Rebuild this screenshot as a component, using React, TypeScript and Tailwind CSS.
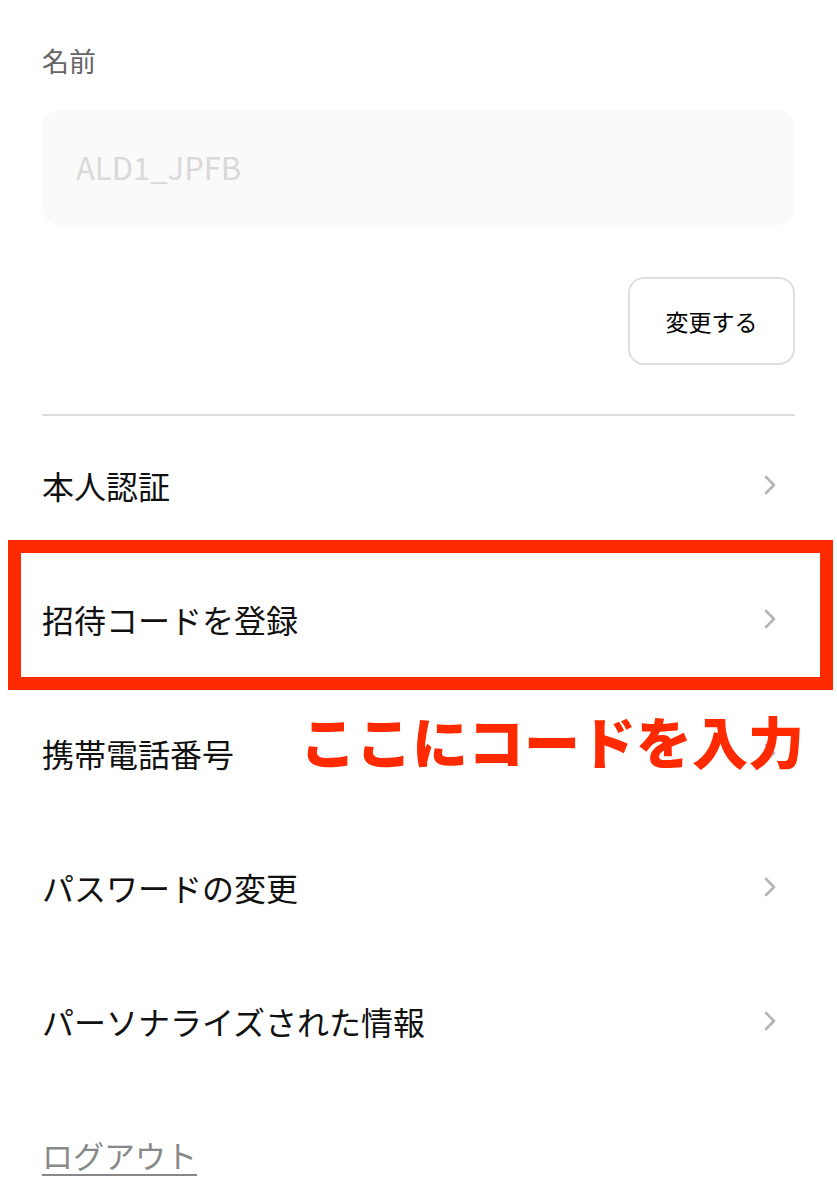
const rows = ["本人認証", "招待コードを登録", "携帯電話番号", "パスワードの変更", "パーソナライズされた情報"];

function Chevron() {
  return (
    <svg width="14" height="20" viewBox="0 0 14 20" fill="none" className="shrink-0 mt-[3px]">
      <path d="M3 2l8 8-8 8" stroke="#b5b5b5" strokeWidth="2.6" strokeLinecap="round" strokeLinejoin="round" />
    </svg>
  );
}

export default function App() {
  return (
    <div
      className="w-[837px] h-[1200px] bg-white overflow-hidden px-[42px] flex flex-col"
      style={{ fontFamily: '"Noto Sans CJK JP", "Noto Sans", sans-serif' }}
    >
      <div className="mt-[44px] text-[27px] leading-[34px] text-[#666]">名前</div>

      <div className="mt-[32px] h-[115px] rounded-[18px] bg-[#fafafa] flex items-center pl-[34px] text-[31px] text-[#d9d9d9]">
        ALD1_JPFB
      </div>

      <button className="mt-[52px] self-end w-[167px] h-[88px] border-2 border-[#dedede] rounded-[16px] text-[23px] text-black bg-white">
        変更する
      </button>

      <div className="mt-[49px] h-[2px] bg-[#dddddd]" />

      <div className="relative">
        {rows.map((r) => (
          <div key={r} className="h-[134px] flex items-center justify-between pr-[18px]">
            <span className="text-[32px] text-[#111] mt-[4px]">{r}</span>
            <Chevron />
          </div>
        ))}

        <div className="absolute left-[-34px] top-[124px] w-[825px] h-[150px] border-[13px] border-[#ff2a00]" />
        <div className="absolute left-[258px] top-[296px] whitespace-nowrap text-[56px] leading-none font-black text-[#ff2a00]">
          ここにコードを入力
        </div>
      </div>

      <div className="mt-[46px]">
        <span className="text-[31px] text-[#888] underline underline-offset-[6px] decoration-2">ログアウト</span>
      </div>
    </div>
  );
}
